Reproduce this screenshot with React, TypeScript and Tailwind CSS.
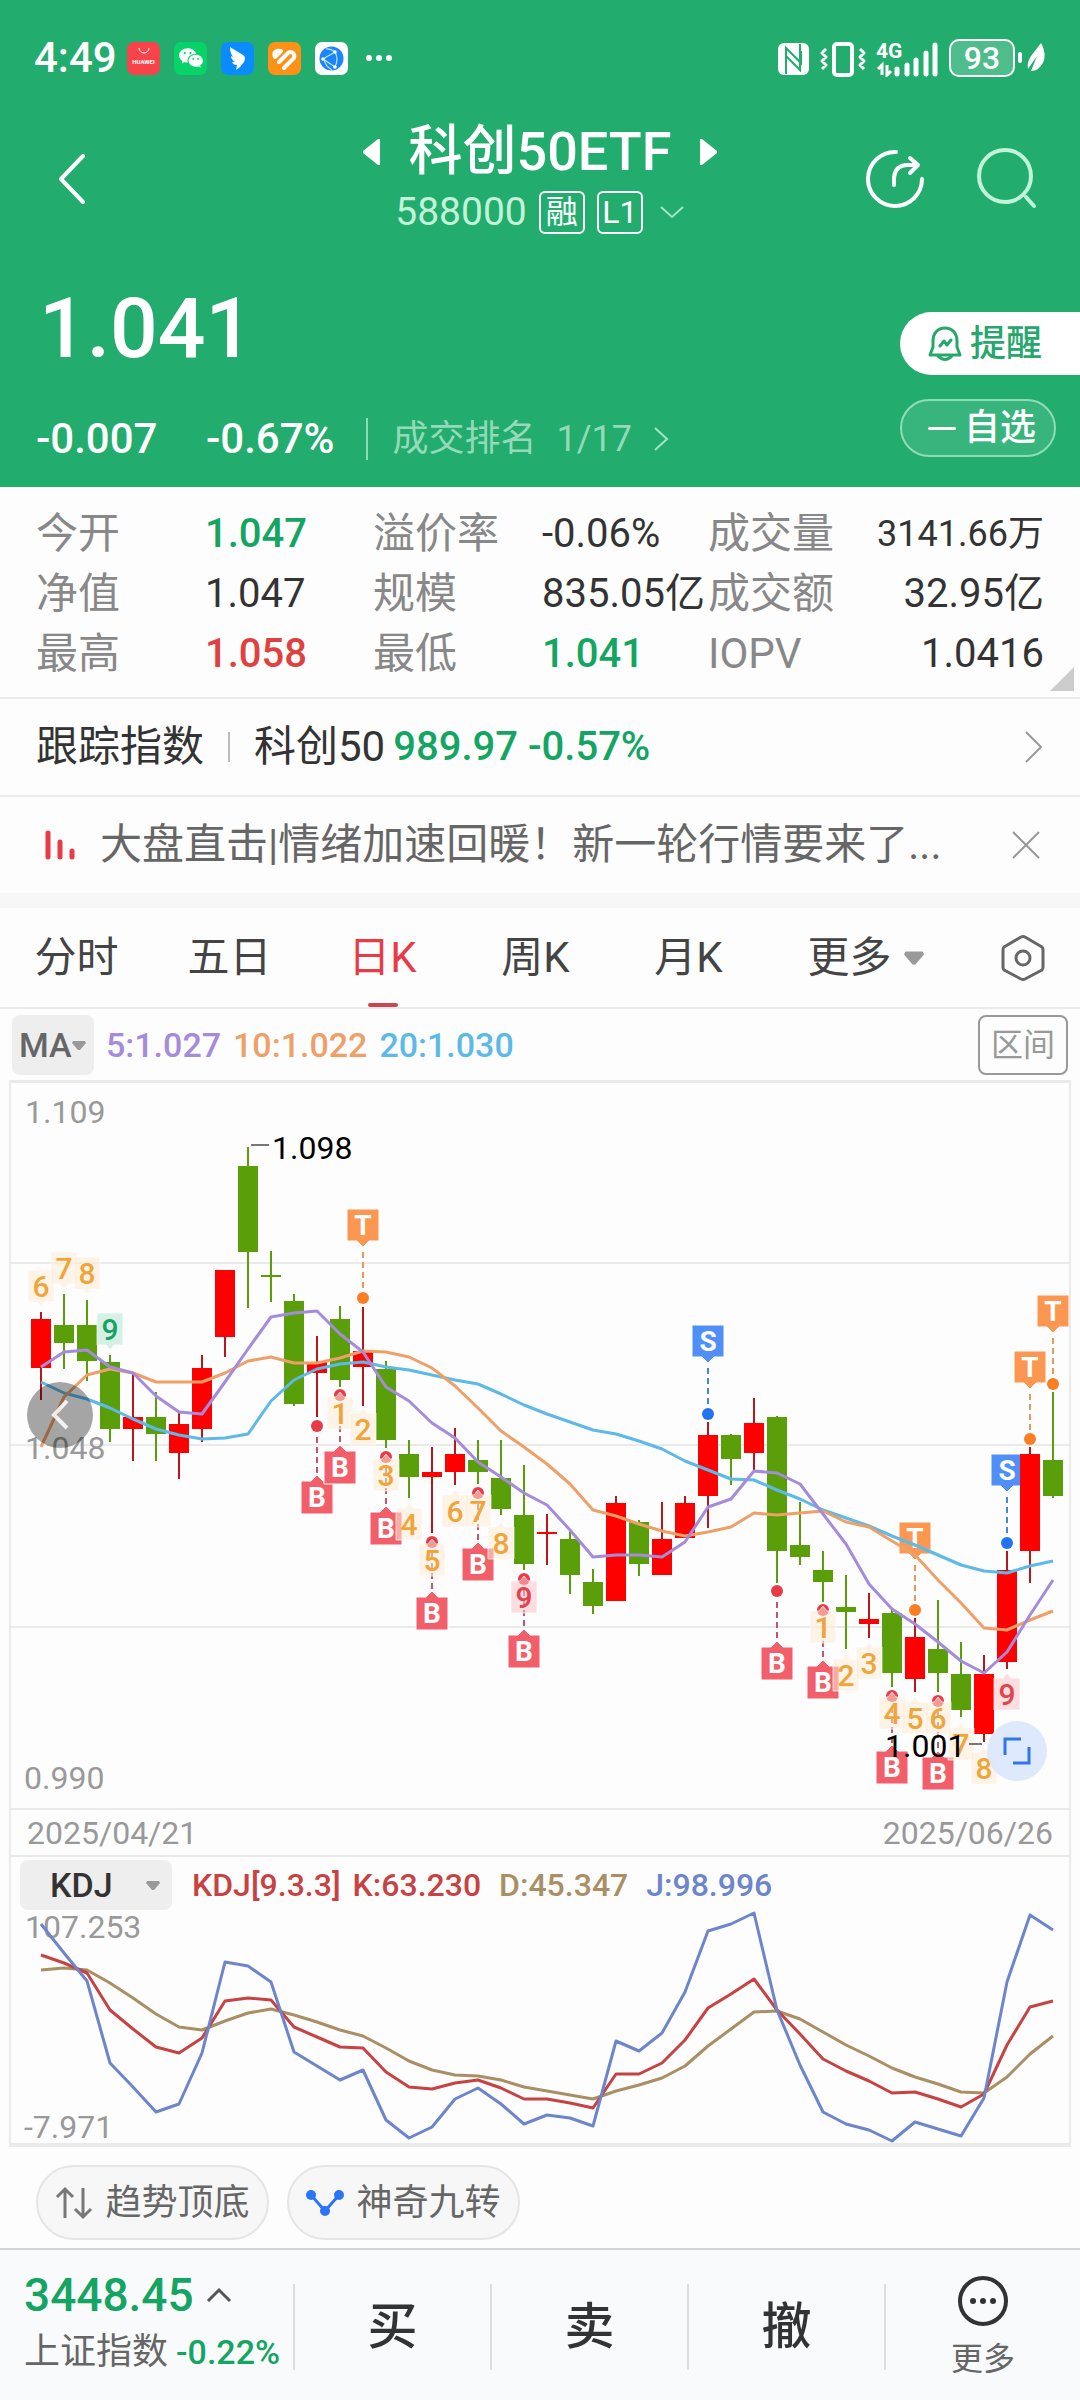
import React from 'react';
import { RiWechatFill } from 'react-icons/ri';

type Candle = [dir: 'up' | 'down', high: number, top: number, bottom: number, low: number];

const STEP = 23;
const cx = (i: number) => 41 + i * STEP;

const candles: Candle[] = [
    ['up', 1312, 1319, 1368, 1400], ['down', 1294, 1325, 1343, 1369], ['down', 1300, 1325, 1361, 1381],
    ['down', 1355, 1362, 1429, 1442], ['up', 1373, 1417, 1429, 1461], ['down', 1392, 1417, 1434, 1461],
    ['up', 1412, 1424, 1453, 1479], ['up', 1355, 1368, 1429, 1442], ['up', 1270, 1270, 1337, 1357],
    ['down', 1147, 1166, 1252, 1308], ['down', 1251, 1275, 1277, 1302], ['down', 1294, 1301, 1404, 1406],
    ['up', 1336, 1362, 1373, 1417], ['down', 1306, 1319, 1380, 1387], ['up', 1307, 1351, 1367, 1406],
    ['down', 1361, 1369, 1440, 1448], ['down', 1440, 1454, 1477, 1498], ['up', 1447, 1472, 1477, 1533],
    ['up', 1428, 1454, 1472, 1485], ['down', 1440, 1460, 1472, 1484], ['down', 1440, 1478, 1509, 1515],
    ['down', 1465, 1515, 1564, 1570], ['up', 1514, 1532, 1534, 1565], ['down', 1532, 1539, 1575, 1594],
    ['down', 1569, 1582, 1606, 1614], ['up', 1496, 1503, 1601, 1601], ['down', 1520, 1522, 1564, 1576],
    ['up', 1502, 1539, 1575, 1575], ['up', 1496, 1503, 1538, 1538], ['up', 1422, 1435, 1496, 1528],
    ['down', 1434, 1435, 1459, 1485], ['up', 1398, 1423, 1453, 1470], ['down', 1416, 1417, 1551, 1583],
    ['down', 1502, 1545, 1557, 1565], ['down', 1551, 1570, 1582, 1602], ['down', 1575, 1607, 1612, 1649],
    ['up', 1593, 1619, 1624, 1638], ['down', 1609, 1613, 1673, 1687], ['up', 1618, 1637, 1679, 1692],
    ['down', 1600, 1649, 1673, 1692], ['down', 1642, 1674, 1710, 1717], ['up', 1655, 1674, 1734, 1742],
    ['up', 1551, 1570, 1662, 1669], ['up', 1447, 1454, 1551, 1583], ['down', 1392, 1460, 1496, 1498],
];

const ma5 = [1367, 1352, 1350, 1367, 1373, 1396, 1412, 1414, 1382, 1349, 1317, 1313, 1311, 1334, 1352, 1387, 1401, 1423, 1438, 1462, 1477, 1493, 1505, 1530, 1557, 1555, 1555, 1557, 1542, 1507, 1499, 1471, 1473, 1484, 1514, 1544, 1584, 1609, 1624, 1642, 1661, 1673, 1652, 1615, 1580];
const ma10 = [1447, 1397, 1375, 1369, 1373, 1382, 1382, 1382, 1373, 1361, 1357, 1363, 1363, 1358, 1351, 1352, 1357, 1368, 1386, 1408, 1431, 1447, 1464, 1484, 1510, 1516, 1524, 1531, 1536, 1532, 1527, 1513, 1515, 1513, 1511, 1522, 1527, 1541, 1555, 1580, 1603, 1628, 1630, 1620, 1611];
const ma20 = [1382, 1393, 1399, 1408, 1419, 1429, 1435, 1439, 1438, 1434, 1401, 1380, 1369, 1364, 1362, 1367, 1370, 1375, 1380, 1384, 1394, 1405, 1414, 1422, 1430, 1434, 1441, 1449, 1461, 1470, 1479, 1480, 1490, 1499, 1510, 1518, 1526, 1536, 1545, 1555, 1565, 1571, 1573, 1566, 1561];

const kLine = [1955, 1963, 1973, 2010, 2029, 2047, 2053, 2038, 2001, 1998, 2000, 2027, 2037, 2047, 2048, 2072, 2087, 2089, 2083, 2080, 2088, 2099, 2099, 2103, 2108, 2074, 2074, 2063, 2040, 2008, 1994, 1979, 2010, 2034, 2059, 2071, 2081, 2093, 2092, 2099, 2107, 2094, 2045, 2007, 2001];
const dLine = [1970, 1968, 1970, 1983, 1998, 2014, 2027, 2030, 2021, 2013, 2009, 2015, 2022, 2030, 2036, 2048, 2061, 2070, 2075, 2076, 2080, 2087, 2091, 2095, 2099, 2091, 2085, 2078, 2066, 2046, 2029, 2012, 2011, 2019, 2032, 2045, 2056, 2068, 2077, 2084, 2092, 2093, 2077, 2054, 2036];
const jLine = [1924, 1953, 1981, 2063, 2087, 2112, 2104, 2053, 1962, 1966, 1982, 2052, 2066, 2080, 2070, 2120, 2138, 2127, 2099, 2088, 2104, 2124, 2115, 2118, 2126, 2041, 2051, 2033, 1992, 1931, 1924, 1913, 2010, 2065, 2112, 2124, 2130, 2141, 2122, 2129, 2136, 2098, 1982, 1915, 1930];

// [candle index, box top, dot centre]
const buySignals = [[12, 1481, 1426], [13, 1451, 1395], [15, 1512, 1457], [17, 1597, 1542], [19, 1548, 1493], [21, 1635, 1579], [32, 1647, 1591], [34, 1666, 1610], [37, 1751, 1696], [39, 1757, 1701]];
const topSignals = [
    { label: 'T', i: 14, top: 1209, dot: 1298 },
    { label: 'S', i: 29, top: 1325, dot: 1414 },
    { label: 'T', i: 38, top: 1522, dot: 1610 },
    { label: 'S', i: 42, top: 1454, dot: 1543 },
    { label: 'T', i: 43, top: 1351, dot: 1439 },
    { label: 'T', i: 44, top: 1295, dot: 1384 },
];

// nine-turn counters, above and below the candles
const countsAbove = [[0, 6, 1270], [1, 7, 1252], [2, 8, 1257], [3, 9, 1313]];
const countsBelow = [[13, 1, 1397], [14, 2, 1413], [15, 3, 1459], [16, 4, 1508], [17, 5, 1544], [18, 6, 1495], [19, 7, 1495], [20, 8, 1527], [21, 9, 1581], [34, 1, 1611], [35, 2, 1659], [36, 3, 1647], [37, 4, 1697], [38, 5, 1702], [39, 6, 1702], [40, 7, 1728], [41, 8, 1752], [42, 9, 1678]];

const stats = [
    { label: '今开', value: '1.047', tone: 'text-[#14a562] font-medium' },
    { label: '溢价率', value: '-0.06%', tone: 'text-[#333]' },
    { label: '成交量', value: '3141.66万', tone: 'text-[#333]' },
    { label: '净值', value: '1.047', tone: 'text-[#333]' },
    { label: '规模', value: '835.05亿', tone: 'text-[#333]' },
    { label: '成交额', value: '32.95亿', tone: 'text-[#333]' },
    { label: '最高', value: '1.058', tone: 'text-[#df4140] font-medium' },
    { label: '最低', value: '1.041', tone: 'text-[#14a562] font-medium' },
    { label: 'IOPV', value: '1.0416', tone: 'text-[#333]' },
];

const tabs = ['分时', '五日', '日K', '周K', '月K'];

const toPoints = (ys: number[]) => ys.map((y, i) => `${cx(i)},${y}`).join(' ');

const StatusBar = () => (
    <div className="flex items-center justify-between h-[116px] pl-[34px] pr-[31px]">
        <div className="flex items-center gap-[14px]">
            <span className="w-[79px] text-[42px] leading-[42px] font-medium">4:49</span>
            <svg className="w-[33px] h-[33px]" viewBox="0 0 33 33">
                <rect width="33" height="33" rx="7" fill="#f9434b" />
                <path d="M12 6a5 5 0 0 0 10 0" fill="none" stroke="#fff" strokeWidth="1" />
                <text x="16.5" y="22" fontSize="6" fontWeight="700" fill="#fff" textAnchor="middle">HUAWEI</text>
            </svg>
            <span className="w-[33px] h-[33px] rounded-[7px] bg-[#07d468] flex items-center justify-center">
                <RiWechatFill className="w-[26px] h-[26px]" />
            </span>
            <svg className="w-[33px] h-[33px]" viewBox="0 0 33 33">
                <rect width="33" height="33" rx="7" fill="#0a8cff" />
                <path d="M9 5c4 3 9 5 13 8 3 2 2 5 1 7l-4 5-4 3 1-5c-3 0-4-1-5-3l3 0c-3-2-4-4-4-6l2 1c-2-3-3-6-3-10z" fill="#fff" />
            </svg>
            <svg className="w-[33px] h-[33px]" viewBox="0 0 33 33">
                <rect width="33" height="33" rx="7" fill="#ff9117" />
                <path d="M7 15l6-6M11 20l9-9q3-2 5 0t1 5L16 26" fill="none" stroke="#fff" strokeWidth="4" strokeLinecap="round" />
                <path d="M7 15q-2-5 2-6 3-1 4 1" fill="none" stroke="#fff" strokeWidth="4" />
            </svg>
            <svg className="w-[33px] h-[33px]" viewBox="0 0 33 33">
                <rect width="33" height="33" rx="7" fill="#fff" />
                <circle cx="16.5" cy="16.5" r="12" fill="#1c86f8" />
                <path d="M8 17l12-7M8 17l12 8M20 10q4 7 0 15M9 17q1 7 8 11M20 10q-5-4-9-3" fill="none" stroke="#bfe6ff" strokeWidth="1.2" />
                <circle cx="8" cy="17" r="1.8" fill="#fff" />
                <circle cx="20" cy="10" r="1.8" fill="#fff" />
                <circle cx="20" cy="25" r="1.8" fill="#fff" />
            </svg>
            <svg className="w-[34px] h-[8px]" viewBox="0 0 34 8" fill="#fff">
                <circle cx="7" cy="4" r="3" />
                <circle cx="17" cy="4" r="3" />
                <circle cx="27" cy="4" r="3" />
            </svg>
        </div>
        <div className="flex items-center">
            <svg className="w-[172px] h-[38px]" viewBox="776 39 172 38" fill="none" stroke="#fff">
                <rect x="777" y="43" width="31" height="32" rx="6" fill="#fff" stroke="none" />
                <path d="M785 74V48l15 15V51M799 44v26L785 56" stroke="#22ac6e" strokeWidth="2" />
                <path d="M825 49l-4 4 4 4-4 4 4 4-4 4M859 49l4 4-4 4 4 4-4 4 4 4" strokeWidth="3" strokeLinejoin="round" />
                <rect x="833" y="44" width="18" height="31" rx="3" strokeWidth="4" />
                <text x="875" y="58" fontSize="21" fontWeight="700" fill="#fff" stroke="none">4G</text>
                <path d="M881 75V65l-4 4M886 65v10l4-4" strokeWidth="3" />
                <path d="M896 74v-5M906 74v-9M915 74V60M925 74V53M934 74V45" strokeWidth="5" strokeLinecap="round" />
            </svg>
            <span className="w-[66px] h-[38px] rounded-[10px] border-2 border-white bg-white/20 flex items-center justify-center text-[32px] leading-[32px] font-medium">93</span>
            <svg className="w-[34px] h-[36px]" viewBox="0 0 34 36" fill="#fff">
                <rect x="3" y="12" width="4" height="11" rx="2" />
                <path d="M26 3c5 9 5 18-1 24-3 3-6 4-9 4l6-15-9 13c-2-10 6-16 13-26z" />
            </svg>
        </div>
    </div>
);

const Header = () => (
    <header className="bg-[#22ac6e] text-white">
        <StatusBar />
        <div className="grid grid-cols-[1fr_auto_1fr] items-center h-[126px]">
            <button aria-label="返回" className="ml-[58px] w-[28px]">
                <svg className="w-[28px] h-[50px]" viewBox="0 0 28 50" fill="none" stroke="#fff" strokeWidth="4" strokeLinecap="round" strokeLinejoin="round">
                    <path d="M25 2L3 25l22 23" />
                </svg>
            </button>
            <div className="pt-[6px]">
                <div className="flex items-center justify-between gap-[27px] h-[60px]">
                    <button aria-label="上一只">
                        <svg className="w-[19px] h-[28px]" viewBox="0 0 19 28" fill="#fff"><path d="M18 1v26h-2L1 15v-2L16 1z" /></svg>
                    </button>
                    <h1 className="text-[54px] leading-[60px] font-medium">科创50ETF</h1>
                    <button aria-label="下一只">
                        <svg className="w-[19px] h-[28px]" viewBox="0 0 19 28" fill="#fff"><path d="M1 1v26h2l15-12v-2L3 1z" /></svg>
                    </button>
                </div>
                <div className="flex items-center justify-center gap-3 h-[60px]">
                    <span className="text-[39px] leading-[42px] text-[#c2f3d9]">588000</span>
                    <span className="w-[46px] h-[43px] rounded-md border-2 border-white flex items-center justify-center text-[32px] leading-[36px]">融</span>
                    <span className="w-[46px] h-[43px] rounded-md border-2 border-white flex items-center justify-center text-[32px] leading-[36px]">L1</span>
                    <svg className="ml-1 w-[26px] h-[16px]" viewBox="0 0 26 16" fill="none" stroke="#a4e3c3" strokeWidth="2"><path d="M2 3l11 10L24 3" /></svg>
                </div>
            </div>
            <div className="flex justify-end gap-[50px] pr-[42px]">
                <button aria-label="分享">
                    <svg className="w-[60px] h-[62px]" viewBox="0 0 60 62" fill="none" stroke="#fff" strokeWidth="4" strokeLinecap="round" strokeLinejoin="round">
                        <path d="M30 4A27 27 0 1 0 56 31" />
                        <path d="M28 37V32q0-15 14-15h9M44 10l8 7-8 8" />
                    </svg>
                </button>
                <button aria-label="搜索">
                    <svg className="w-[62px] h-[62px]" viewBox="0 0 62 62" fill="none" stroke="#c2f3d9" strokeWidth="4" strokeLinecap="round">
                        <circle cx="29" cy="28" r="26" />
                        <path d="M50 49l8 9" />
                    </svg>
                </button>
            </div>
        </div>
        <div className="flex justify-between pt-[43px] pb-[27px]">
            <div className="pl-[36px]">
                <div className="pl-[3px] text-[84px] leading-[88px] font-medium">1.041</div>
                <div className="flex items-center mt-[45px] h-[42px] text-[42px] leading-[42px] font-medium">
                    <span className="w-[170px]">-0.007</span>
                    <span>-0.67%</span>
                    <span className="ml-[32px] w-[2px] h-[42px] bg-[#8fd9b5]" />
                    <a href="#rank" className="ml-[24px] flex items-center text-[36px] font-normal text-[#94dab8]">
                        成交排名<span className="ml-[20px]">1/17</span>
                        <svg className="ml-[20px] w-[18px] h-[26px]" viewBox="0 0 18 26" fill="none" stroke="#a4e3c3" strokeWidth="2"><path d="M3 2l12 11L3 24" /></svg>
                    </a>
                </div>
            </div>
            <div className="flex flex-col gap-6 pt-[27px] w-[180px]">
                <button className="flex items-center gap-2 h-[63px] pl-[28px] rounded-l-full bg-white text-[36px] leading-[40px] text-[#26a76b] font-medium">
                    <svg className="w-[34px] h-[38px]" viewBox="0 0 34 38" fill="none" stroke="#26a76b" strokeWidth="3" strokeLinejoin="round" strokeLinecap="round">
                        <path d="M5 22V16C5 8 10 3 17 3s12 5 12 13v6l3 8H2zM10 31q7 7 14 0M12 21l4-5 3 4 4-5" />
                    </svg>
                    提醒
                </button>
                <button className="flex items-center gap-2 h-[58px] w-[156px] pl-[26px] rounded-full border-2 border-[#8fdcb6] bg-white/10 text-[36px] leading-[40px] font-medium">
                    <span className="w-[28px] h-[3px] rounded bg-white" />
                    自选
                </button>
            </div>
        </div>
    </header>
);

const Stats = () => (
    <dl className="grid grid-cols-[337fr_335fr_336fr] px-[36px] pt-[17px] pb-[13px] border-b-2 border-[#ececec] relative leading-[60px]">
        {stats.map((s, i) => (
            <div key={s.label} className={`flex min-w-0 whitespace-nowrap ${i % 3 === 2 ? 'justify-between' : ''}`}>
                <dt className={`text-[42px] text-[#888] ${i % 3 === 2 ? '' : 'w-[169px] shrink-0'}`}>{s.label}</dt>
                <dd className={`${i === 2 ? 'text-[36px]' : 'text-[40px]'} ${s.tone}`}>{s.value}</dd>
            </div>
        ))}
        <svg className="absolute right-[6px] bottom-[6px] w-[24px] h-[24px]" viewBox="0 0 24 24" fill="#ccc"><path d="M24 0v24H0z" /></svg>
    </dl>
);

const Flag = ({ x, top, up, fill, text }: { x: number; top: number; up?: boolean; fill: string; text: string }) => (
    <g>
        <path
            d={up
                ? `M${x - 16} ${top}h10l6-6 6 6h10v33h-32z`
                : `M${x - 16} ${top}h32v32h-10l-6 6-6-6h-10z`}
            fill={fill}
            stroke="#fff"
            strokeWidth="1"
        />
        <text x={x} y={top + 26} fontSize="28" fontWeight="700" fill="#fff" textAnchor="middle">{text}</text>
    </g>
);

const Count = ({ i, n, top, below }: { i: number; n: number; top: number; below?: boolean }) => {
    const x = cx(i);
    const nine = n === 9;
    const fill = nine ? (below ? '#fbc4c8' : '#b4e6d0') : '#fdebd3';
    const ink = nine ? (below ? '#e0444f' : '#17a263') : '#f0a53a';
    return (
        <g>
            <path
                d={below
                    ? `M${x - 13} ${top}h9l4-5 4 5h9v32h-26z`
                    : `M${x - 13} ${top}h26v32h-9l-4 5-4-5h-9z`}
                fill={fill}
                fillOpacity="0.55"
                stroke="#fff"
                strokeOpacity="0.7"
            />
            <text x={x} y={top + 27} fontSize="30" fontWeight="500" fill={ink} textAnchor="middle">{n}</text>
        </g>
    );
};

const CandleChart = () => (
    <div className="relative">
        <svg className="block w-full" viewBox="11 1083 1058 725">
            {[1263, 1445, 1627].map(y => <path key={y} d={`M11 ${y}H1069`} stroke="#eaeaea" strokeWidth="2" />)}

            <g fontSize="32" fill="#999">
                <text x="25" y="1123">1.109</text>
                <text x="25" y="1459">1.048</text>
                <text x="24" y="1789">0.990</text>
            </g>

            {topSignals.map(s => {
                const t = s.label === 'T';
                return (
                    <g key={s.i}>
                        <path d={`M${cx(s.i)} ${s.top + 43}V${s.dot - 8}`} stroke={t ? '#e59a5c' : '#4a86d8'} strokeWidth="2" strokeDasharray="6 4" />
                        <circle cx={cx(s.i)} cy={s.dot} r="6" fill={t ? '#f97f22' : '#2273f2'} />
                        <Flag x={cx(s.i)} top={s.top} fill={t ? '#fb9750' : '#4f8ff7'} text={s.label} />
                    </g>
                );
            })}
            {buySignals.map(([i, top, dot]) => (
                <g key={i}>
                    <path d={`M${cx(i)} ${dot + 11}V${top - 5}`} stroke="#c4566a" strokeWidth="2" strokeDasharray="6 4" />
                    <circle cx={cx(i)} cy={dot} r="6" fill="#e83b47" />
                </g>
            ))}
            {buySignals.map(([i, top]) => <Flag key={i} x={cx(i)} top={top} up fill="#f25f6b" text="B" />)}

            {candles.map(([dir, high, top, bottom, low], i) => {
                const up = dir === 'up';
                const x = cx(i);
                return (
                    <g key={i}>
                        <path d={`M${x} ${high}V${low}`} stroke={up ? '#b8181c' : '#5a9e0a'} strokeWidth="2" />
                        <rect x={x - 10} y={top} width="20" height={bottom - top} fill={up ? '#ff0000' : '#5a9e0a'} />
                    </g>
                );
            })}

            <g fill="none" strokeWidth="3" strokeLinejoin="round">
                <polyline points={toPoints(ma20)} stroke="#5cb9e8" />
                <polyline points={toPoints(ma10)} stroke="#eda067" />
                <polyline points={toPoints(ma5)} stroke="#a58bdc" />
            </g>

            {countsAbove.map(([i, n, top]) => <Count key={i} i={i} n={n} top={top} />)}
            {countsBelow.map(([i, n, top]) => <Count key={i} i={i} n={n} top={top} below />)}

            {/* high / low callouts */}
            <path d="M251 1145h18M969 1744h13" stroke="#777" strokeWidth="2" />
            <g fontSize="32" fill="#000">
                <text x="272" y="1159">1.098</text>
                <text x="885" y="1757">1.001</text>
            </g>
        </svg>
        <button aria-label="向左" className="absolute left-[16px] top-[299px] w-[66px] h-[66px] rounded-full bg-black/35 flex items-center justify-center">
            <svg className="w-[20px] h-[32px]" viewBox="0 0 20 32" fill="none" stroke="#fff" strokeOpacity="0.85" strokeWidth="4"><path d="M17 2L4 16l13 13" /></svg>
        </button>
        <button aria-label="全屏" className="absolute right-[22px] bottom-[27px] w-[60px] h-[60px] rounded-full bg-[#dbe7fd]/90 flex items-center justify-center">
            <svg className="w-[28px] h-[28px]" viewBox="0 0 28 28" fill="none" stroke="#3375e8" strokeWidth="3"><path d="M2 18V2h16M26 10v16H10" /></svg>
        </button>
    </div>
);

const Caret = ({ className }: { className: string }) => (
    <svg className={className} viewBox="0 0 14 9" fill="#999"><path d="M1 0h12l1 2-6 7H6L0 2z" /></svg>
);

const KdjPanel = () => (
    <section>
        <div className="flex items-center h-[56px] pl-[9px] text-[32px] leading-[40px] font-medium">
            <div className="relative w-[152px] h-[50px]">
                <select aria-label="副图指标" defaultValue="KDJ" className="appearance-none w-full h-full pl-[30px] rounded-lg bg-[#eee] text-[34px] leading-[50px] text-[#333]">
                    <option>KDJ</option>
                    <option>MACD</option>
                </select>
                <Caret className="absolute right-[12px] top-[21px] w-[14px] h-[9px] pointer-events-none" />
            </div>
            <span className="ml-[20px] text-[#c74243]">KDJ[9.3.3]</span>
            <span className="ml-[12px] text-[#c74243]">K:63.230</span>
            <span className="ml-[18px] text-[#a98f63]">D:45.347</span>
            <span className="ml-[18px] text-[#6c85cb]">J:98.996</span>
        </div>
        <svg className="block w-full overflow-visible" viewBox="11 1913 1058 230">
            <g fontSize="32" fill="#999">
                <text x="25" y="1938">107.253</text>
                <text x="24" y="2138">-7.971</text>
            </g>
            <g fill="none" strokeWidth="3" strokeLinejoin="round">
                <polyline points={toPoints(dLine)} stroke="#a98f63" />
                <polyline points={toPoints(kLine)} stroke="#c74243" />
                <polyline points={toPoints(jLine)} stroke="#6c85cb" />
            </g>
        </svg>
    </section>
);

const BottomBar = () => (
    <footer className="grow grid grid-cols-[293fr_197fr_197fr_197fr_196fr] border-t-2 border-[#d3d4d8] bg-[#f9fafc] pt-[20px]">
        <a href="#index" className="pl-[24px] whitespace-nowrap">
            <div className="flex items-center gap-[12px] text-[46px] leading-[50px] text-[#14a562] font-medium">
                3448.45
                <svg className="w-[26px] h-[16px]" viewBox="0 0 26 16" fill="none" stroke="#555" strokeWidth="3"><path d="M2 14L13 3l11 11" /></svg>
            </div>
            <div className="flex items-center gap-[8px] mt-[8px] leading-[48px]">
                <span className="text-[36px] text-[#666]">上证指数</span>
                <span className="text-[34px] text-[#14a562] font-medium">-0.22%</span>
            </div>
        </a>
        {['买', '卖', '撤'].map(label => (
            <button key={label} className="mt-[14px] h-[86px] border-l-2 border-[#dcdde0] text-[50px] leading-[56px] text-[#333] font-medium">
                {label}
            </button>
        ))}
        <button className="mt-[14px] h-[86px] border-l-2 border-[#dcdde0] flex flex-col items-center justify-center text-[32px] leading-[40px] text-[#666]">
            <svg className="w-[52px] h-[52px] shrink-0" viewBox="0 0 52 52" fill="#333">
                <circle cx="26" cy="26" r="23" fill="none" stroke="#333" strokeWidth="4" />
                <circle cx="16" cy="26" r="3" />
                <circle cx="26" cy="26" r="3" />
                <circle cx="36" cy="26" r="3" />
            </svg>
            <span className="mt-[12px]">更多</span>
        </button>
    </footer>
);

export default function App() {
    return (
        <div className="min-h-screen flex flex-col bg-[#fdfdfd] text-[#333] font-['Roboto','Noto_Sans_CJK_SC',sans-serif]">
            <Header />
            <Stats />

            {/* Tracked index */}
            <a href="#track" className="flex items-center h-[98px] px-[36px] border-b-2 border-[#ececec] text-[42px] leading-[48px]">
                跟踪指数
                <span className="mx-[24px] w-[2px] h-[30px] bg-[#bbb]" />
                科创50
                <span className="ml-[8px] text-[40px] font-medium text-[#14a562]">989.97 -0.57%</span>
                <svg className="ml-auto w-[20px] h-[34px]" viewBox="0 0 20 34" fill="none" stroke="#999" strokeWidth="2"><path d="M2 2l15 15L2 32" /></svg>
            </a>

            {/* News ticker */}
            <div className="flex items-center h-[96px] px-[36px] text-[42px] leading-[48px] text-[#666]">
                <svg className="ml-[8px] w-[32px] h-[32px] shrink-0" viewBox="0 0 32 32" stroke="#e93b45" strokeWidth="5" strokeLinecap="round"><path d="M4 4v24M16 13v15M28 22v6" /></svg>
                <a href="#news" className="ml-[24px] truncate">大盘直击|情绪加速回暖！新一轮行情要来了...</a>
                <button aria-label="关闭" className="ml-auto">
                    <svg className="w-[34px] h-[30px]" viewBox="0 0 34 30" fill="none" stroke="#999" strokeWidth="2"><path d="M3 2l26 26M29 2L3 28" /></svg>
                </button>
            </div>
            <div className="h-[15px] bg-[#f7f7f7]" />

            {/* Period tabs */}
            <nav className="grid grid-cols-[153fr_153fr_153fr_153fr_153fr_201fr_114fr] h-[101px] border-b-2 border-[#ebebeb] text-[42px] leading-[48px] text-[#444]">
                {tabs.map(tab => (
                    <button key={tab} className={`relative flex items-center justify-center ${tab === '日K' ? 'text-[#e93b45]' : ''}`}>
                        {tab}
                        {tab === '日K' && <span className="absolute bottom-0 w-[30px] h-[4px] rounded-full bg-[#cc4650]" />}
                    </button>
                ))}
                <button className="flex items-center justify-center gap-[12px]">
                    更多
                    <Caret className="w-[20px] h-[14px]" />
                </button>
                <button aria-label="设置" className="flex items-center justify-center">
                    <svg className="w-[44px] h-[48px]" viewBox="0 0 44 48" fill="none" stroke="#666" strokeWidth="3" strokeLinejoin="round">
                        <path d="M20 3q2-1 4 0l17 10q1 1 1 3v17q0 2-1 3L24 45q-2 1-4 0L3 36q-1-1-1-3V16q0-2 1-3z" />
                        <circle cx="22" cy="24" r="7" />
                    </svg>
                </button>
            </nav>

            {/* Moving averages */}
            <div className="flex items-center h-[71px] px-[12px] gap-[12px] text-[34px] leading-[40px]">
                <div className="relative w-[82px] h-[60px]">
                    <select aria-label="主图指标" defaultValue="MA" className="appearance-none w-full h-full pl-[7px] rounded-lg bg-[#eee] text-[#666] font-medium">
                        <option>MA</option>
                        <option>BOLL</option>
                    </select>
                    <Caret className="absolute right-[8px] top-[26px] w-[14px] h-[9px] pointer-events-none" />
                </div>
                <span className="text-[#a58bdc] font-medium">5:1.027</span>
                <span className="text-[#eda067] font-medium">10:1.022</span>
                <span className="text-[#5cb9e8] font-medium">20:1.030</span>
                <button className="ml-auto w-[90px] h-[60px] rounded-lg border-2 border-[#999] text-[32px] text-[#999]">区间</button>
            </div>

            <div className="mx-[9px] border-2 border-t-3 border-b-4 border-[#eaeaea]">
                <CandleChart />
                <div className="flex items-center justify-between h-[49px] px-[16px] border-y-2 border-[#eaeaea] text-[32px] leading-[40px] text-[#999]">
                    <span>2025/04/21</span>
                    <span>2025/06/26</span>
                </div>
                <KdjPanel />
            </div>

            <div className="flex gap-[18px] px-[36px] pt-[18px] pb-[8px] text-[36px] leading-[40px] text-[#666]">
                <button className="flex items-center justify-center gap-[12px] w-[233px] h-[75px] rounded-full border-2 border-[#e5e5e5] bg-[#f7f7f7]">
                    <svg className="w-[38px] h-[34px] shrink-0" viewBox="0 0 38 34" fill="none" stroke="#777" strokeWidth="3"><path d="M10 32V3M2 11l8-8 8 8M28 2v29M20 23l8 8 8-8" /></svg>
                    趋势顶底
                </button>
                <button className="flex items-center justify-center gap-[12px] w-[233px] h-[75px] rounded-full border-2 border-[#e5e5e5] bg-[#f7f7f7]">
                    <svg className="w-[38px] h-[28px] shrink-0" viewBox="0 0 38 28" fill="#2b74f5">
                        <path d="M5 6l14 16L33 6" fill="none" stroke="#2b74f5" strokeWidth="3" />
                        <circle cx="5" cy="6" r="5" />
                        <circle cx="33" cy="6" r="5" />
                        <circle cx="19" cy="22" r="5" />
                    </svg>
                    神奇九转
                </button>
            </div>

            <BottomBar />
        </div>
    );
}
